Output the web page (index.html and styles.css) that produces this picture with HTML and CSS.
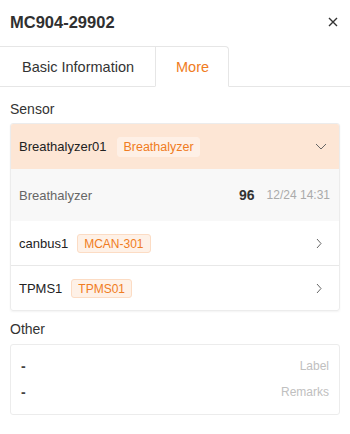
FILE: index.html
```html
<!DOCTYPE html>
<html lang="en">
<head>
  <meta charset="UTF-8">
  <meta name="viewport" content="width=device-width, initial-scale=1.0">
  <title>MC904-29902</title>
  <link rel="stylesheet" href="styles.css">
</head>
<body>

  <div class="panel">
    <!-- Header -->
    <div class="header">
      <h2 class="title">MC904-29902</h2>
      <span class="close">
        <svg width="10" height="10" viewBox="0 0 10 10"><path d="M1 1L9 9M9 1L1 9" stroke="#333" stroke-width="1.4" fill="none"/></svg>
      </span>
    </div>

    <!-- Tabs -->
    <div class="tabs">
      <div class="tab">Basic Information</div>
      <div class="tab active">More</div>
      <div class="tab-rest"></div>
    </div>

    <!-- Sensor -->
    <div class="section-title">Sensor</div>
    <div class="card">
      <div class="row open">
        <span class="name">Breathalyzer01</span>
        <span class="tag tag-soft">Breathalyzer</span>
        <svg class="chev down" width="12" height="7" viewBox="0 0 12 7"><path d="M1 1L6 6L11 1" stroke="#666" stroke-width="1" fill="none"/></svg>
      </div>
      <div class="sub-row">
        <span class="sub-name">Breathalyzer</span>
        <span class="value">96</span>
        <span class="time">12/24 14:31</span>
      </div>
      <div class="row">
        <span class="name">canbus1</span>
        <span class="tag">MCAN-301</span>
        <svg class="chev" width="6" height="11" viewBox="0 0 6 11"><path d="M1 1L5 5.5L1 10" stroke="#666" stroke-width="1" fill="none"/></svg>
      </div>
      <div class="row last">
        <span class="name">TPMS1</span>
        <span class="tag">TPMS01</span>
        <svg class="chev" width="6" height="11" viewBox="0 0 6 11"><path d="M1 1L5 5.5L1 10" stroke="#666" stroke-width="1" fill="none"/></svg>
      </div>
    </div>

    <!-- Other -->
    <div class="section-title other">Other</div>
    <div class="card info">
      <div class="info-row">
        <span class="dash">-</span>
        <span class="label">Label</span>
      </div>
      <div class="info-row">
        <span class="dash">-</span>
        <span class="label">Remarks</span>
      </div>
    </div>
  </div>

</body>
</html>
```

FILE: styles.css
```css
* {
  margin: 0;
  padding: 0;
  box-sizing: border-box;
}

body {
  font-family: 'Liberation Sans', Arial, sans-serif;
  background-color: #fff;
  color: #333;
  width: 350px;
}

/* Header */
.header {
  display: flex;
  justify-content: space-between;
  align-items: center;
  height: 46px;
  padding: 0 12px 2px 10px;
}

.header .title {
  font-size: 16.5px;
  font-weight: bold;
  color: #303030;
}

.header .close {
  display: flex;
}

/* Tabs */
.tabs {
  display: flex;
  height: 41px;
}

.tabs .tab {
  display: flex;
  align-items: center;
  padding: 0 21px 0 22px;
  font-size: 14.5px;
  color: #333;
  border-top: 1px solid #e6e6e6;
  border-bottom: 1px solid #e6e6e6;
}

.tabs .tab.active {
  padding: 0 19px 0 20px;
  color: #f07c22;
  border-left: 1px solid #e6e6e6;
  border-right: 1px solid #e6e6e6;
  border-bottom-color: transparent;
  border-top-right-radius: 4px;
}

.tabs .tab-rest {
  flex: 1;
  border-bottom: 1px solid #e6e6e6;
}

/* Sections */
.section-title {
  font-size: 14px;
  color: #333;
  padding: 14px 10px 0;
  height: 36px;
}

.section-title.other {
  padding-top: 10px;
  height: 33px;
}

.card {
  margin: 0 10px;
  border: 1px solid #ececec;
  border-radius: 3px;
  box-shadow: 0 1px 2px rgba(0, 0, 0, 0.05);
  overflow: hidden;
}

.card .row {
  display: flex;
  align-items: center;
  height: 45px;
  padding: 0 18px 0 8px;
  border-bottom: 1px solid #e8e8e8;
}

.card .row.last {
  border-bottom: none;
  height: 44px;
}

.card .row.open {
  background-color: #fde6d5;
  border-bottom: none;
}

.card .name {
  font-size: 13px;
  color: #222;
}

.card .tag {
  margin-left: 9px;
  padding: 0 6px;
  height: 19px;
  line-height: 18px;
  font-size: 12px;
  color: #f07c22;
  background-color: #fef1e7;
  border: 1px solid #fcdcc4;
  border-radius: 3px;
}

.card .tag-soft {
  margin-left: 11px;
  padding: 0 5px;
  height: 20px;
  line-height: 19px;
  font-size: 12.5px;
  background-color: #fef0e6;
  border-color: #fef0e6;
}

.card .chev {
  margin-left: auto;
  margin-right: -1px;
}

.card .chev.down {
  margin-right: -6px;
}

.sub-row {
  display: flex;
  align-items: center;
  height: 52px;
  padding: 0 9px 0 8px;
  background-color: #f8f8f8;
}

.sub-row .sub-name {
  font-size: 13px;
  color: #666;
}

.sub-row .value {
  margin-left: auto;
  font-size: 14px;
  font-weight: bold;
  color: #333;
}

.sub-row .time {
  margin-left: 12px;
  font-size: 12px;
  color: #aaa;
}

/* Other */
.card.info {
  padding: 8px 10px 10px 10px;
  box-shadow: none;
  height: 71px;
}

.info-row {
  display: flex;
  justify-content: space-between;
  align-items: center;
  height: 26px;
}

.info-row .dash {
  font-size: 14px;
  font-weight: bold;
  color: #444;
}

.info-row .label {
  font-size: 12px;
  color: #c0c0c0;
}
```
